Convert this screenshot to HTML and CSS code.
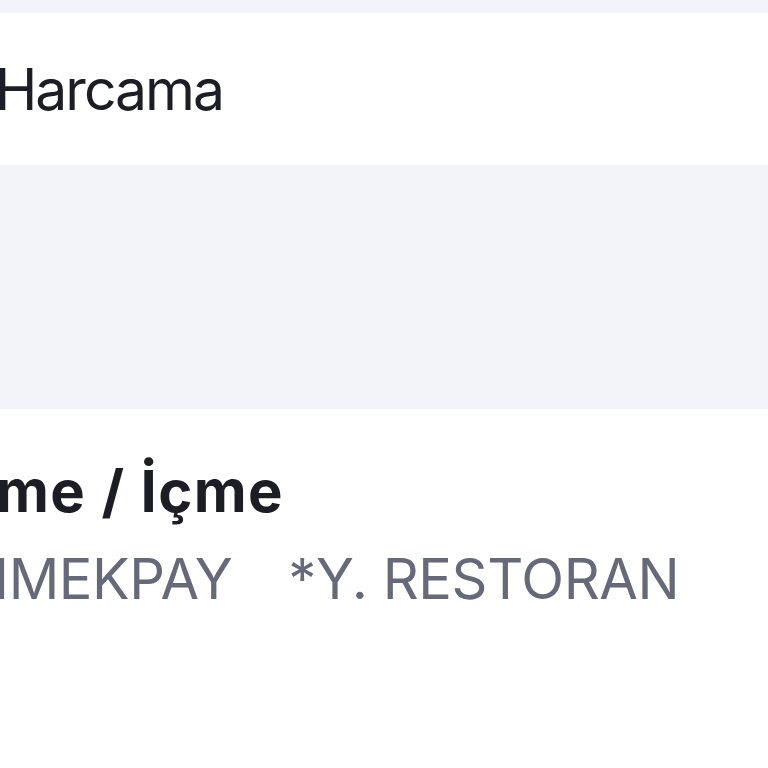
FILE: index.html
```html
<!DOCTYPE html>
<html lang="tr">
<head>
    <meta charset="UTF-8">
    <meta name="viewport" content="width=device-width, initial-scale=1.0">
    <link rel="stylesheet" href="styles.css">
</head>
<body>
    <div class="screen">
        <div class="top-strip"></div>

        <!-- Header -->
        <div class="header">
            <span class="header-title">Harcama</span>
        </div>

        <!-- Empty area -->
        <div class="gap-area"></div>

        <!-- Transaction -->
        <div class="transaction">
            <div class="tx-category">me / İçme</div>
            <div class="tx-merchant">
                <span class="tx-part">IMEKPAY</span>
                <span class="tx-part">*Y. RESTORAN</span>
            </div>
        </div>
    </div>
</body>
</html>
```

FILE: styles.css
```css
body {
    margin: 0;
    padding: 0;
    font-family: Inter, "Noto Sans", sans-serif;
    background-color: #fff;
}

.screen {
    width: 768px;
    height: 768px;
    overflow: hidden;
}

.top-strip {
    height: 13px;
    background-color: #f3f4f9;
}

.header {
    height: 152px;
    display: flex;
    align-items: center;
    padding-top: 1px;
    box-sizing: border-box;
    background-color: #fff;
}

.header-title {
    font-size: 57px;
    line-height: 68px;
    letter-spacing: -2px;
    color: #1d1e25;
    margin-left: -5px;
}

.gap-area {
    height: 244px;
    background-color: #f3f4f9;
}

.transaction {
    padding-top: 48px;
}

.tx-category {
    font-size: 58px;
    line-height: 68px;
    font-weight: 700;
    letter-spacing: 1.4px;
    color: #1d1e25;
    margin-left: -4px;
}

.tx-merchant {
    display: flex;
    gap: 56px;
    margin-top: 20px;
    font-size: 56px;
    line-height: 68px;
    letter-spacing: -0.4px;
    color: #656979;
    margin-left: -6px;
}
```
